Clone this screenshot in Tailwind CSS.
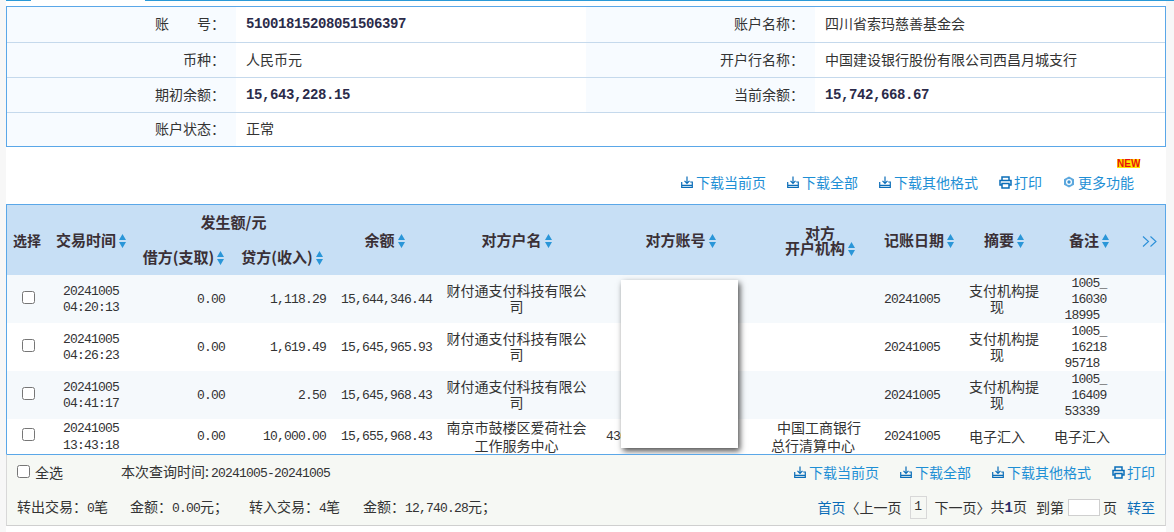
<!DOCTYPE html>
<html lang="zh-CN">
<head>
    <meta charset="UTF-8">
    <title>账户明细</title>
    <script src="https://cdn.jsdelivr.net/npm/@tailwindcss/browser@4"></script>
</head>
<body class="bg-[#f7f7f7] text-[#333] text-[14px] leading-[16px] font-['Noto_Sans_CJK_SC','Liberation_Sans',sans-serif] h-[532px] overflow-hidden">

    <svg class="hidden">
        <symbol id="sort" viewBox="0 0 7 14"><path d="M3.5 0 7 6H0z M0 8h7l-3.5 6z" fill="#2a96d8"/></symbol>
        <symbol id="dl" viewBox="0 0 12 12"><path d="M6 0.5v6.5M3.5 4.8 6 7.3l2.5-2.5M0.7 6v5.3h10.6V6H9.2M0.7 9.3h10.6" fill="none" stroke="#0a6db8" stroke-width="1.2"/></symbol>
        <symbol id="pr" viewBox="0 0 13 13"><path d="M3 4V1h7v3M3 9H1V4.5h11V9h-2M3 7.5h7V12H3z" fill="none" stroke="#0a6db8" stroke-width="1.5"/></symbol>
        <symbol id="gear" viewBox="0 0 12 12"><path d="M6 .5 11 3.2v5.6L6 11.5 1 8.8V3.200z" fill="#5da8de"/><circle cx="6" cy="6" r="3" fill="#fff"/><circle cx="6" cy="6" r="1.700" fill="#3f94d2"/></symbol>
    </svg>

    <!-- 顶部页签线 -->
    <div class="flex ml-[6px] h-[1px]">
        <div class="w-[25px] bg-[#2a9ad8]"></div>
        <div class="w-[114px] bg-white"></div>
        <div class="flex-1 bg-[#2a9ad8]"></div>
    </div>

    <div class="ml-[6px] w-[1160px] h-[531px] bg-white pt-[5px]">

        <!-- 账户信息 -->
        <div class="border border-[#5aa7e8]">
            <table class="w-full table-fixed">
                <colgroup><col class="w-[229px]"><col class="w-[350px]"><col class="w-[229px]"><col></colgroup>
                <tr class="h-[35px] border-b border-[#c5d9ec]">
                    <td class="bg-[#f7fbff] text-right pr-[11px] pb-[2px]">账&emsp;&emsp;号：</td>
                    <td class="pl-[10px] font-['Liberation_Mono'] font-bold text-[14px] tracking-[-0.4px] text-[#2b2b4a]">51001815208051506397</td>
                    <td class="bg-[#f7fbff] text-right pr-[11px] pb-[2px]">账户名称：</td>
                    <td class="pl-[10px] pb-[2px]">四川省索玛慈善基金会</td>
                </tr>
                <tr class="h-[35px] border-b border-[#c5d9ec]">
                    <td class="bg-[#f7fbff] text-right pr-[11px] pb-[2px]">币种：</td>
                    <td class="pl-[10px] pb-[2px]">人民币元</td>
                    <td class="bg-[#f7fbff] text-right pr-[11px] pb-[2px]">开户行名称：</td>
                    <td class="pl-[10px] pb-[2px]">中国建设银行股份有限公司西昌月城支行</td>
                </tr>
                <tr class="h-[35px] border-b border-[#c5d9ec]">
                    <td class="bg-[#f7fbff] text-right pr-[11px] pb-[2px]">期初余额：</td>
                    <td class="pl-[10px] font-['Liberation_Mono'] font-bold text-[14px] tracking-[-0.4px] text-[#2b2b4a]">15,643,228.15</td>
                    <td class="bg-[#f7fbff] text-right pr-[11px] pb-[2px]">当前余额：</td>
                    <td class="pl-[10px] font-['Liberation_Mono'] font-bold text-[14px] tracking-[-0.4px] text-[#2b2b4a]">15,742,668.67</td>
                </tr>
                <tr class="h-[34px]">
                    <td class="bg-[#f7fbff] text-right pr-[11px] pb-[2px]">账户状态：</td>
                    <td class="pl-[10px] pb-[2px]" colspan="3">正常</td>
                </tr>
            </table>
        </div>

        <!-- 工具栏 -->
        <div class="h-[57px] flex justify-end items-end pb-[14px] pr-[32px] gap-[21px] text-[#1e8fd5]">
            <a class="flex items-center gap-[3px]"><svg class="w-[12px] h-[12px]"><use href="#dl"/></svg>下载当前页</a>
            <a class="flex items-center gap-[3px]"><svg class="w-[12px] h-[12px]"><use href="#dl"/></svg>下载全部</a>
            <a class="flex items-center gap-[3px]"><svg class="w-[12px] h-[12px]"><use href="#dl"/></svg>下载其他格式</a>
            <a class="flex items-center gap-[2px]"><svg class="w-[13px] h-[13px]"><use href="#pr"/></svg>打印</a>
            <a class="relative flex items-center gap-[3px]"><svg class="w-[12px] h-[12px]"><use href="#gear"/></svg>更多功能
                <span class="absolute left-[54px] top-[-15px] text-[10px] leading-[9px] font-bold font-['Liberation_Sans'] text-[#e8120c] bg-[#ffe500] whitespace-nowrap">NEW</span>
            </a>
        </div>

        <!-- 交易明细 -->
        <div class="border-x border-t border-[#5aa7e8] h-[250px] overflow-hidden relative">
            <table class="w-full table-fixed text-center">
                <colgroup>
                    <col class="w-[40px]"><col class="w-[88px]"><col class="w-[97px]"><col class="w-[100px]"><col class="w-[105px]"><col class="w-[159px]">
                    <col class="w-[169px]"><col class="w-[110px]"><col class="w-[88px]"><col class="w-[82px]"><col class="w-[88px]"><col class="w-[32px]">
                </colgroup>
                <thead class="bg-[#c7dff5] font-bold text-[15px] text-[#3a3036]">
                    <tr class="h-[35px]">
                        <th rowspan="2" class="text-[14px]">选择</th>
                        <th rowspan="2">交易时间<svg class="inline-block w-[7px] h-[14px] ml-[3px] align-[-2px]"><use href="#sort"/></svg></th>
                        <th colspan="2" class="pb-[2px]">发生额/元</th>
                        <th rowspan="2">余额<svg class="inline-block w-[7px] h-[14px] ml-[3px] align-[-2px]"><use href="#sort"/></svg></th>
                        <th rowspan="2">对方户名<svg class="inline-block w-[7px] h-[14px] ml-[3px] align-[-2px]"><use href="#sort"/></svg></th>
                        <th rowspan="2">对方账号<svg class="inline-block w-[7px] h-[14px] ml-[3px] align-[-2px]"><use href="#sort"/></svg></th>
                        <th rowspan="2" class="leading-[15px]">对方<br>开户机构<svg class="inline-block w-[7px] h-[14px] ml-[3px] align-[-2px]"><use href="#sort"/></svg></th>
                        <th rowspan="2">记账日期<svg class="inline-block w-[7px] h-[14px] ml-[3px] align-[-2px]"><use href="#sort"/></svg></th>
                        <th rowspan="2">摘要<svg class="inline-block w-[7px] h-[14px] ml-[3px] align-[-2px]"><use href="#sort"/></svg></th>
                        <th rowspan="2">备注<svg class="inline-block w-[7px] h-[14px] ml-[3px] align-[-2px]"><use href="#sort"/></svg></th>
                        <th rowspan="2">
                            <svg class="inline-block w-[15px] h-[11px]" viewBox="0 0 15 11"><path d="M1 .5 6.500 5.500 1 10.500M8.500 .5 14 5.500 8.500 10.500" fill="none" stroke="#2a8fd8" stroke-width="1.100"/></svg>
                        </th>
                    </tr>
                    <tr class="h-[35px]">
                        <th class="whitespace-nowrap pb-[2px]">借方(支取)<svg class="inline-block w-[7px] h-[14px] ml-[3px] align-[-2px]"><use href="#sort"/></svg></th>
                        <th class="whitespace-nowrap pb-[2px]">贷方(收入)<svg class="inline-block w-[7px] h-[14px] ml-[3px] align-[-2px]"><use href="#sort"/></svg></th>
                    </tr>
                </thead>
                <tbody>
                    <tr class="h-[48px] bg-[#f5f9fc]">
                        <td><input type="checkbox" class="align-middle translate-x-[1px] -translate-y-[3px]"></td>
                        <td class="translate-y-[1px] font-['Liberation_Mono'] text-[13px] tracking-[-0.8px]">20241005<br>04:20:13</td>
                        <td class="translate-y-[1px] text-right pr-[7px] font-['Liberation_Mono'] text-[13px] tracking-[-0.8px]">0.00</td>
                        <td class="translate-y-[1px] text-right pr-[6px] font-['Liberation_Mono'] text-[13px] tracking-[-0.8px]">1,118.29</td>
                        <td class="translate-y-[1px] text-right pr-[5px] font-['Liberation_Mono'] text-[13px] tracking-[-0.8px]">15,644,346.44</td>
                        <td class="-translate-y-[1px] px-[9px]">财付通支付科技有限公司</td>
                        <td></td>
                        <td></td>
                        <td class="translate-y-[1px] text-left pl-[9px] font-['Liberation_Mono'] text-[13px] tracking-[-0.8px]">20241005</td>
                        <td class="-translate-y-[1px] whitespace-nowrap">支付机构提<br><span class="pr-[14px]">现</span></td>
                        <td class="translate-y-[1px] font-['Liberation_Mono'] text-[13px] tracking-[-0.8px]">1005_<br>16030<br><span class="pr-[14px]">18995</span></td>
                        <td></td>
                    </tr>
                    <tr class="h-[48px] bg-white">
                        <td><input type="checkbox" class="align-middle translate-x-[1px] -translate-y-[3px]"></td>
                        <td class="translate-y-[1px] font-['Liberation_Mono'] text-[13px] tracking-[-0.8px]">20241005<br>04:26:23</td>
                        <td class="translate-y-[1px] text-right pr-[7px] font-['Liberation_Mono'] text-[13px] tracking-[-0.8px]">0.00</td>
                        <td class="translate-y-[1px] text-right pr-[6px] font-['Liberation_Mono'] text-[13px] tracking-[-0.8px]">1,619.49</td>
                        <td class="translate-y-[1px] text-right pr-[5px] font-['Liberation_Mono'] text-[13px] tracking-[-0.8px]">15,645,965.93</td>
                        <td class="-translate-y-[1px] px-[9px]">财付通支付科技有限公司</td>
                        <td></td>
                        <td></td>
                        <td class="translate-y-[1px] text-left pl-[9px] font-['Liberation_Mono'] text-[13px] tracking-[-0.8px]">20241005</td>
                        <td class="-translate-y-[1px] whitespace-nowrap">支付机构提<br><span class="pr-[14px]">现</span></td>
                        <td class="translate-y-[1px] font-['Liberation_Mono'] text-[13px] tracking-[-0.8px]">1005_<br>16218<br><span class="pr-[14px]">95718</span></td>
                        <td></td>
                    </tr>
                    <tr class="h-[48px] bg-[#f5f9fc]">
                        <td><input type="checkbox" class="align-middle translate-x-[1px] -translate-y-[3px]"></td>
                        <td class="translate-y-[1px] font-['Liberation_Mono'] text-[13px] tracking-[-0.8px]">20241005<br>04:41:17</td>
                        <td class="translate-y-[1px] text-right pr-[7px] font-['Liberation_Mono'] text-[13px] tracking-[-0.8px]">0.00</td>
                        <td class="translate-y-[1px] text-right pr-[6px] font-['Liberation_Mono'] text-[13px] tracking-[-0.8px]">2.50</td>
                        <td class="translate-y-[1px] text-right pr-[5px] font-['Liberation_Mono'] text-[13px] tracking-[-0.8px]">15,645,968.43</td>
                        <td class="-translate-y-[1px] px-[9px]">财付通支付科技有限公司</td>
                        <td></td>
                        <td></td>
                        <td class="translate-y-[1px] text-left pl-[9px] font-['Liberation_Mono'] text-[13px] tracking-[-0.8px]">20241005</td>
                        <td class="-translate-y-[1px] whitespace-nowrap">支付机构提<br><span class="pr-[14px]">现</span></td>
                        <td class="translate-y-[1px] font-['Liberation_Mono'] text-[13px] tracking-[-0.8px]">1005_<br>16409<br><span class="pr-[14px]">53339</span></td>
                        <td></td>
                    </tr>
                    <tr class="h-[35px] bg-white">
                        <td><input type="checkbox" class="align-middle translate-x-[1px] -translate-y-[4px]"></td>
                        <td class="font-['Liberation_Mono'] text-[13px] tracking-[-0.8px] leading-[17px]">20241005<br>13:43:18</td>
                        <td class="text-right pr-[7px] font-['Liberation_Mono'] text-[13px] tracking-[-0.8px]">0.00</td>
                        <td class="text-right pr-[6px] font-['Liberation_Mono'] text-[13px] tracking-[-0.8px]">10,000.00</td>
                        <td class="text-right pr-[5px] font-['Liberation_Mono'] text-[13px] tracking-[-0.8px]">15,655,968.43</td>
                        <td class="-translate-y-[1px] px-[9px] leading-[18px]">南京市鼓楼区爱荷社会工作服务中心</td>
                        <td class="text-left pl-[10px] font-['Liberation_Mono'] text-[13px] tracking-[-0.8px]">430</td>
                        <td class="-translate-y-[1px] -translate-x-[7px] leading-[18px] whitespace-nowrap"><span class="pl-[12px]">中国工商银行</span><br>总行清算中心</td>
                        <td class="text-left pl-[9px] font-['Liberation_Mono'] text-[13px] tracking-[-0.8px]">20241005</td>
                        <td class="-translate-y-[1px] whitespace-nowrap"><span class="pr-[14px]">电子汇入</span></td>
                        <td class="-translate-y-[1px] whitespace-nowrap"><span class="pr-[14px]">电子汇入</span></td>
                        <td></td>
                    </tr>
                </tbody>
            </table>
            <!-- 遮挡对方账号 -->
            <div class="absolute left-[614px] top-[75px] w-[117px] h-[168px] bg-white shadow-[2px_3px_6px_rgba(0,0,0,0.7)]"></div>
        </div>

        <!-- 底部汇总 -->
        <div class="h-[72px] bg-[#f6f8f4] border-x border-x-[#d8d8d8] border-t border-t-[#5aa7e8] border-b border-b-[#cfcfcf] px-[10px]">
            <div class="h-[34px] flex items-center justify-between">
                <div class="flex items-center">
                    <input type="checkbox" class="mr-[5px] -translate-y-[1px]">
                    <span>全选</span>
                    <span class="ml-[58px]">本次查询时间:<span class="pl-[2px] font-['Liberation_Mono'] text-[13px] tracking-[-0.8px]">20241005-20241005</span></span>
                </div>
                <div class="flex items-center gap-[21px] text-[#1e8fd5]">
                    <a class="flex items-center gap-[3px]"><svg class="w-[12px] h-[12px]"><use href="#dl"/></svg>下载当前页</a>
                    <a class="flex items-center gap-[3px]"><svg class="w-[12px] h-[12px]"><use href="#dl"/></svg>下载全部</a>
                    <a class="flex items-center gap-[3px]"><svg class="w-[12px] h-[12px]"><use href="#dl"/></svg>下载其他格式</a>
                    <a class="flex items-center gap-[2px]"><svg class="w-[13px] h-[13px]"><use href="#pr"/></svg>打印</a>
                </div>
            </div>
            <div class="h-[36px] flex items-center justify-between">
                <div class="flex items-center whitespace-pre">
                    <span class="w-[113px]">转出交易：<span class="font-['Liberation_Mono'] text-[13px] tracking-[-0.8px]">0</span>笔</span>
                    <span class="w-[119px]">金额：<span class="font-['Liberation_Mono'] text-[13px] tracking-[-0.8px]">0.00</span>元；</span>
                    <span class="w-[114px]">转入交易：<span class="font-['Liberation_Mono'] text-[13px] tracking-[-0.8px]">4</span>笔</span>
                    <span>金额：<span class="font-['Liberation_Mono'] text-[13px] tracking-[-0.8px]">12,740.28</span>元；</span>
                </div>
                <div class="flex items-center">
                    <a class="text-[#0a6db8]">首页</a>
                    <span class="mr-[8px]">〈上一页</span>
                    <span class="w-[17px] h-[23px] mr-[8px] border border-[#d8d8d8] flex items-center justify-center font-['Liberation_Mono'] text-[13px]">1</span>
                    <span>下一页〉</span>
                    <span class="mr-[9px]">共<b class="font-['Liberation_Mono'] text-[#2b2b6a]">1</b>页</span>
                    <span class="mr-[4px]">到第</span>
                    <input type="text" class="w-[32px] h-[17px] bg-white border border-[#cfcfcf] mr-[3px]">
                    <span class="mr-[10px]">页</span>
                    <a class="text-[#0a6db8]">转至</a>
                </div>
            </div>
        </div>
    </div>
</body>
</html>
